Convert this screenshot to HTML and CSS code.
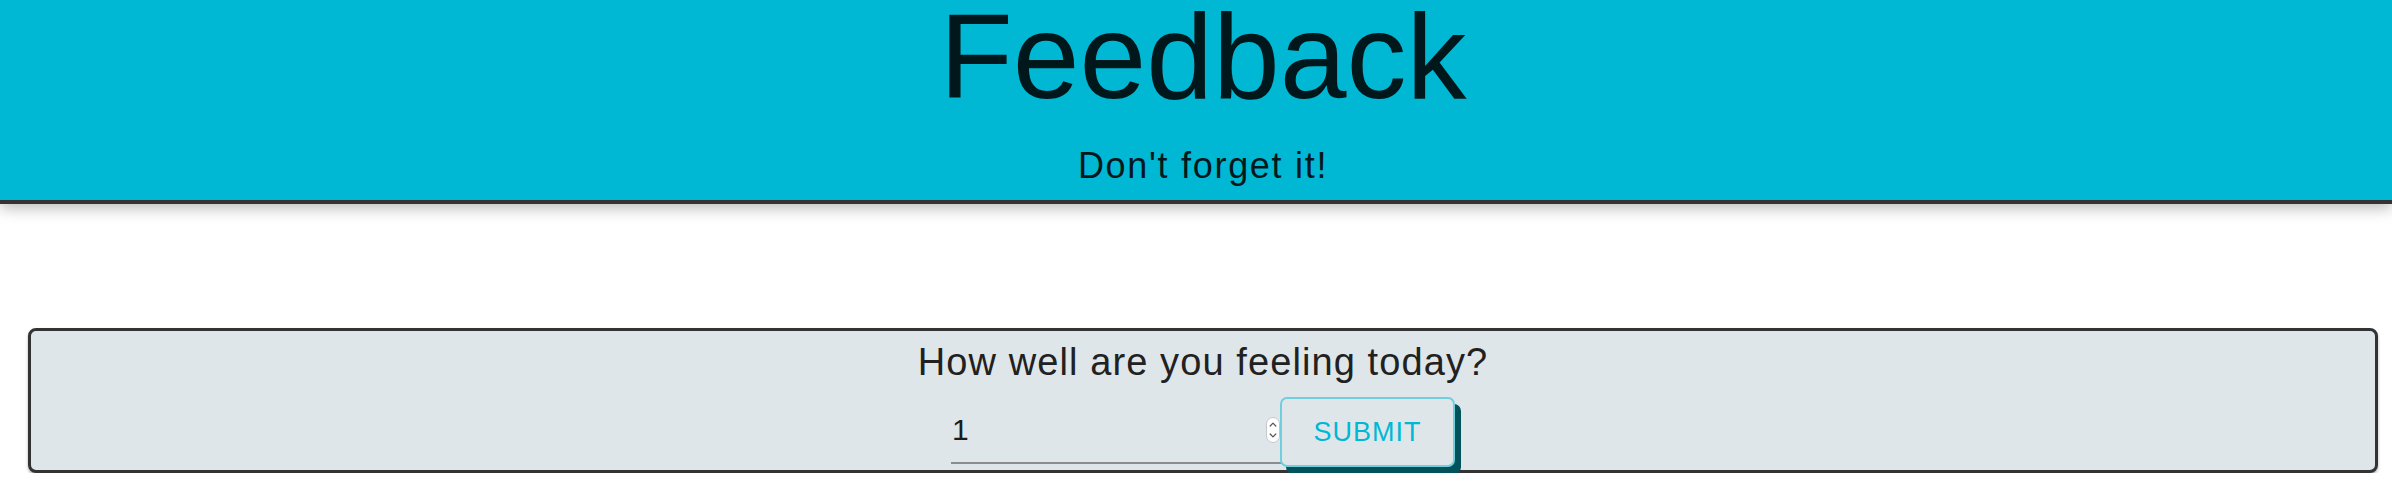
FILE: index.html
```html
<!DOCTYPE html>
<html lang="en">
<head>
<meta charset="utf-8">
<title>Feedback</title>
<link rel="stylesheet" href="styles.css">
</head>
<body>
<header class="hero">
  <div class="hero-inner">
    <h1 class="hero-title">Feedback</h1>
    <p class="hero-sub">Don't forget it!</p>
  </div>
</header>
<main class="page">
  <form class="card">
    <label class="question" for="mood">How well are you feeling today?</label>
    <div class="row">
      <div class="field">
        <input class="field-input" id="mood" type="number" value="1" min="1" max="10">
        <svg class="spinner" width="14" height="26" viewBox="0 0 14 26" aria-hidden="true">
          <rect x="0.5" y="0.5" width="13" height="25" rx="6.5" fill="#ffffff" stroke="#c4c8cb"/>
          <path d="M4.2 9 L7 6.2 L9.8 9" fill="none" stroke="#555" stroke-width="1.2" stroke-linecap="round" stroke-linejoin="round"/>
          <path d="M4.2 17 L7 19.8 L9.8 17" fill="none" stroke="#555" stroke-width="1.2" stroke-linecap="round" stroke-linejoin="round"/>
        </svg>
      </div>
      <button class="submit" type="button">SUBMIT</button>
    </div>
  </form>
</main>
</body>
</html>
```
FILE: styles.css
```css
html, body {
  margin: 0;
  padding: 0;
  background: #ffffff;
}

body {
  font-family: "Liberation Sans", Arial, Helvetica, sans-serif;
}

.hero {
  background: #00b8d4;
  border-bottom: 4px solid #333333;
  box-shadow: 0 4px 14px rgba(0, 0, 0, 0.28);
  color: #00181c;
  position: relative;
}

.hero-inner {
  padding: 0 0 14px 14px;
  text-align: center;
}

.hero-title {
  margin: 0;
  font-size: 120px;
  font-weight: 400;
  line-height: 112px;
  letter-spacing: 0;
}

.hero-sub {
  margin: 34px 0 0 0;
  font-size: 36px;
  line-height: 40px;
  letter-spacing: 1.7px;
}

.page {
  padding: 124px 14px 0 28px;
}

.card {
  display: flex;
  flex-direction: column;
  align-items: center;
  background: #dfe6e9;
  border: 3px solid #333333;
  border-radius: 8px;
  box-shadow: 0 2px 3px rgba(0, 0, 0, 0.3);
  padding: 9px 0 3px 0;
}

.question {
  display: block;
  font-size: 38px;
  line-height: 44px;
  letter-spacing: 1.1px;
  color: #212121;
  margin-bottom: 13px;
}

.row {
  display: flex;
  align-items: flex-start;
}

.field {
  display: flex;
  align-items: center;
  width: 329px;
  height: 65px;
  border-bottom: 2px solid #8a8c8e;
  padding-right: 4px;
  box-sizing: content-box;
  margin-right: -4px;
}

.field-input {
  flex: 1;
  min-width: 0;
  border: 0;
  outline: 0;
  background: transparent;
  font-family: "Liberation Sans", Arial, Helvetica, sans-serif;
  font-size: 30px;
  line-height: 36px;
  height: 36px;
  padding: 0 0 0 1px;
  color: #1c1c1c;
  -moz-appearance: textfield;
}

.field-input::-webkit-inner-spin-button,
.field-input::-webkit-outer-spin-button {
  -webkit-appearance: none;
  margin: 0;
}

.spinner {
  flex: none;
  display: block;
}

.submit {
  width: 175px;
  height: 70px;
  background: #dfe6e9;
  border: 2px solid #6fcfdf;
  border-radius: 7px;
  box-shadow: 6px 7px 0 #01525b;
  color: #00b8d4;
  font-family: "Liberation Sans", Arial, Helvetica, sans-serif;
  font-size: 27px;
  letter-spacing: 1px;
  padding: 0;
  cursor: pointer;
}
```
